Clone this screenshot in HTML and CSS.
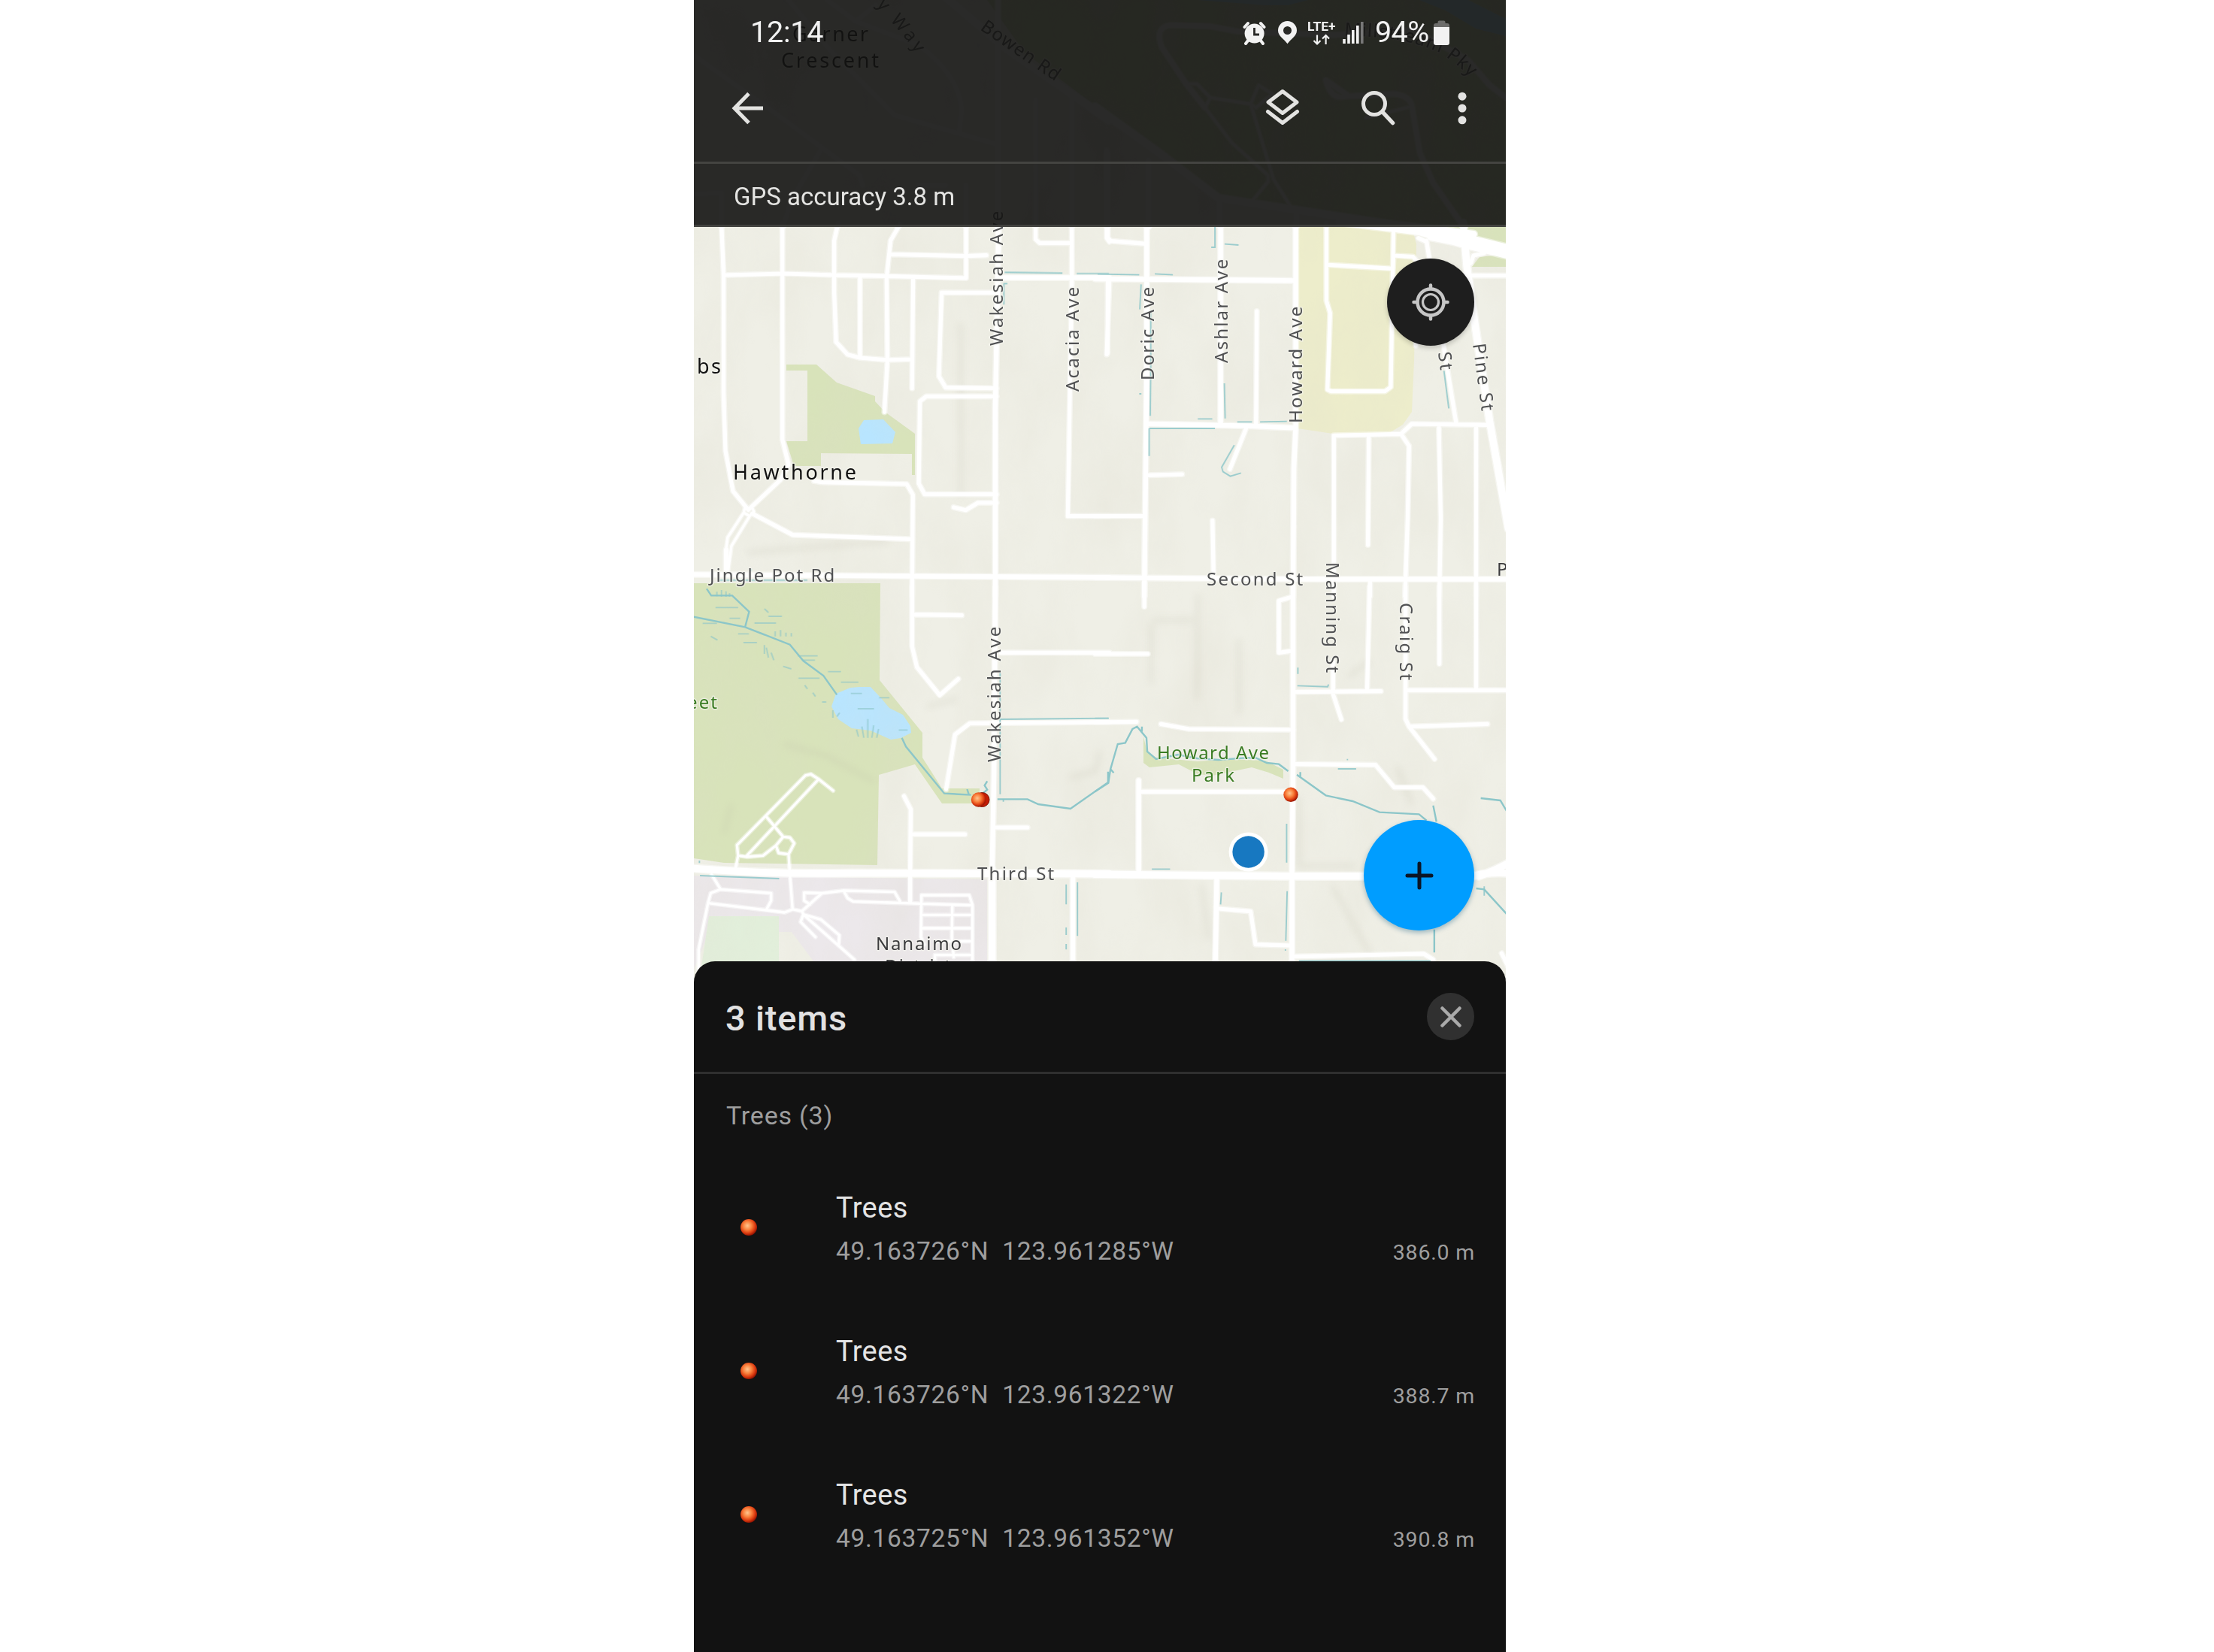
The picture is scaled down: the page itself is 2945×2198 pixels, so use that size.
FILE: index.html
```html
<!DOCTYPE html>
<html lang="en">
<head>
<meta charset="utf-8">
<title>Map - 3 items</title>
<link rel="stylesheet" href="styles.css">
</head>
<body>
<main class="phone">
<svg class="map" viewBox="0 0 1080 1340" aria-label="Map">
  <defs>
    <filter id="soft" x="-20%" y="-20%" width="140%" height="140%"><feGaussianBlur stdDeviation="5"/></filter>
    <filter id="relief" x="0" y="0" width="100%" height="100%">
      <feTurbulence type="fractalNoise" baseFrequency="0.014 0.007" numOctaves="4" seed="8"/>
      <feColorMatrix values="0 0 0 0 0.72  0 0 0 0 0.7  0 0 0 0 0.6  0.9 0 0 0 -0.3"/>
    </filter>
    <radialGradient id="ball" cx="42%" cy="40%" r="62%">
      <stop offset="0" stop-color="#ffc58e"/><stop offset=".42" stop-color="#f9803c"/><stop offset=".74" stop-color="#dc3c10"/><stop offset="1" stop-color="#8f1000"/>
    </radialGradient>
    <g id="roads">
      <g transform="translate(-8,0) scale(.35714,.33333)">
        <path d="M22 220L400 510L500 590L640 700M375 0L530 200L770 460L1150 575M520 0L625 85L860 180Q1010 300 1020 440L1010 530M500 590L440 700L385 800L355 905M625 85L700 20M640 700L650 740M860 740H960"/>
        <path class="wide" d="M1155 0V930"/>
        <path class="trunk" d="M940 -30L1180 190L1568 480"/>
        <path d="M1295 400V905M1430 390V905M22 775L125 770V905M1035 740V905M1560 600V905"/>
      </g>
      <g transform="translate(537,0) scale(.35714,.33333)">
        <path class="trunk" d="M-10 425L230 610L450 790L600 815L1060 890L1400 935"/>
        <path class="wide" d="M520 125L420 105L270 100Q210 110 240 190L330 335L400 430M520 125L880 140L1180 120L1380 240L1460 340L1520 390M850 320Q870 400 920 385L1100 375Q1160 380 1170 420L1200 610L1250 730L1360 900M850 320L930 380M35 610V905M190 640V905M455 790V905M740 850V905"/>
        <path class="path" d="M330 335L370 335L420 390L570 415L600 340L650 375L590 430L570 415L655 715L725 835M400 430L500 570L635 700V725L570 810M420 390L400 430M1170 425L1000 470"/>
      </g>
      <g transform="translate(-8,290) scale(.35714,.33333)">
        <path d="M125 20L133 230V700L140 930L168 1090L225 1165M240 1180L390 1265L830 1282M352 20V885L375 985L345 1045L225 1165M560 20L545 90V300L552 495L595 545L640 558L740 567L835 564M790 25L755 90L740 240L743 570L732 775M140 228L360 222L545 228L740 232L1036 240V20M755 145L1035 152L1112 149M641 235V555M839 240L835 680M1150 298H945L935 632L960 677L1150 680M1150 712H888L864 732L860 1060L882 1103H1150M990 1155L1035 1166L1080 1137H1150M470 1050L500 1055L815 1062L838 1105L835 1510M1295 20V85L1310 100H1430M1430 20V260L1415 1190H1570M1570 250L1560 545M1560 30V80L1570 95"/>
        <path class="wide" d="M1158 20L1145 760V1510M1170 238H1570"/>
        <path class="path" d="M212 1158H240L246 1172L230 1190L208 1176ZM208 1176L148 1275L140 1340M230 1190L162 1310L148 1425"/>
        <path class="wide" d="M143 1325V1415"/>
        <path class="wide" d="M20 1423L840 1430L1570 1435"/>
      </g>
      <g transform="translate(537,290) scale(.35714,.33333)">
        <path class="wide" d="M183 20V600L178 1100L174 1510M458 20V815M738 20V830L731 1000L728 1510M-10 243L735 250M190 822L560 830L735 838M-10 1435L740 1442L1530 1442"/>
        <path d="M38 20V80L50 92L180 103M38 250L37 540M593 372L590 825M555 835L493 1002M180 1027L315 1023M-10 1190H175M428 1208L432 1440M852 20V330L866 380L856 685L870 692H1070L1092 675L1102 50M860 187L1100 202L1102 150L1175 155L1190 175L1185 510M1225 90L1255 300L1290 520L1335 815M1390 230H1530M880 1510V868L1130 862L1170 822L1455 826M1010 870L1007 1305M1130 862L1160 910L1155 1190L1145 1510M1271 826L1278 1200L1273 1510M1410 830V1510M1015 1442V1510M1195 80L1225 95M1390 180L1400 150L1440 140"/>
        <path class="trunk" d="M900 15L1200 55L1380 110L1530 150M1200 55L1360 75L1530 120M1240 75L1530 138"/>
        <path class="trunk" d="M1362 20L1375 190L1405 420L1460 810L1530 1240"/>
      </g>
      <g transform="translate(-8,780) scale(.35714,.33333)">
        <path d="M835 0V240L853 323L938 435L1007 370M840 113L1020 116M1165 265H1570M1570 542L1050 547L995 592L962 810M805 838L830 890L828 1140M840 990H1032M1140 963H1265M828 1140V1260"/>
        <path class="wide" d="M1145 0L1140 750L1133 1140"/><path class="trunk" d="M1133 1130V1530M20 1126Q300 1150 600 1145L1570 1148"/>
        <path class="wide" d="M1434 1160V1530"/>
        <path class="path" d="M178 1125L187 1075L183 1033L438 755L458 750L487 770L541 816M487 770L220 1075M187 1075L220 1080L280 1075L328 1035L355 1000L290 917M355 1000L380 1003L396 1026L375 1070L338 1065L328 1035M375 1070L380 1150L390 1290M88 1150L122 1210L85 1225L75 1265L40 1450V1530M122 1210L310 1225V1255L293 1290M75 1265L360 1302L390 1290L425 1297L500 1225L580 1215L770 1220L790 1258M500 1225L433 1223V1255L455 1270M580 1215L595 1245L615 1258L870 1267L1060 1273L1048 1233H870L868 1400L880 1430M1060 1273V1530M870 1312H1060M870 1365H1060M985 1273L983 1400L990 1480M920 1417H1060M920 1472H1060V1530M425 1297L430 1310L420 1340L475 1400M430 1310L495 1330L564 1393L562 1430M430 1310L620 1490M920 1472V1530"/>
      </g>
      <g transform="translate(537,780) scale(.35714,.33333)">
        <path class="wide" d="M728 0V720L724 1140V1530M444 1165L438 1530M153 775V1140"/>
        <path class="trunk" d="M-10 1150L700 1157L1400 1157Q1450 1140 1530 1145M1420 1157Q1470 1140 1530 1105"/>
        <path d="M174 0V82M-10 270H187M-10 543L145 541M236 550L340 570L730 573M725 42L675 58V265L725 258M735 422L1055 419M877 300V430L908 532M1013 0L1004 410M1147 0V530L1160 560L1255 690M1273 0V310M1410 0V410M1147 415H1530M1165 560L1452 550M735 710L1035 713L1105 803H1212L1250 848M160 820H715M450 1287L570 1298L588 1430L720 1434M735 1478L1215 1467L1250 1490M1505 1465L1530 1520"/>
      </g>
    </g>
  </defs>
  <rect class="land" width="1080" height="1340"/>
  <g class="park">
    <path d="M390 0L440 70L500 115L540 145L640 220L700 260L800 277L990 302L1080 325V0Z"/>
    <path d="M123 485L163 485L190 509L241 527V534L254 548L294 577V632H290V604L169 603V620H133L123 587H151V493H123Z"/>
    <path d="M0 776H248L247 905L304 975V1008L330 1049H380V1069H330L294 1017L246 1031L244 1151L40 1148L0 1142Z"/>
    <path d="M598 980L603 1001L615 1008L670 1013L710 1010L760 1012L784 1024V1036L765 1028L742 1021L718 1026L690 1032L670 1030L645 1017L606 1021L598 1015Z"/>
    <path d="M980 302H1080V327L1030 315ZM1045 342L1080 338V355H1035Z"/>
  </g>
  <path class="school" d="M803 302H955L961 325L958 480L955 548L943 565L925 576L850 577L803 570Z"/>
  <path class="campus" d="M0 1165L390 1170V1300H175L130 1240H20L0 1290Z"/>
  <path class="field" d="M20 1219H113V1300H8Z"/>
  <g class="marsh-blue"><path d="M226 559L252 558L268 575L264 590L222 591L219 570Z"/><path d="M189 923L208 915L220 914L235 914L250 930L260 942L278 951L288 966L289 975L275 982L262 984L235 972L210 969L192 957L183 940Z"/><path d="M670 0H817L790 7H760ZM965 0H1030L1080 25V48L1040 38L1000 14Z"/></g>
  <rect width="1080" height="1340" filter="url(#relief)" opacity=".42"/>
  <g class="shade" filter="url(#soft)">
    <path d="M610 825H665M670 790V930M725 850V950M608 830V910M805 1130V1152H880M935 1020L955 1070M870 900L900 880M310 940L350 930M120 990L175 1005L240 1040M500 1035L535 1025L540 1000M675 1175L685 1250M70 735L260 720M355 430V660M805 1060V1150M40 1110L50 1070M850 1180L900 1270"/>
  </g>
  <g class="stream">
    <g transform="translate(-8,780) scale(.35714,.33333)"><path d="M22 122L213 163L380 233L430 298L505 357L555 433M70 10L87 37L165 37L228 102L213 163M797 605L812 640L955 827L1055 833M1040 810L1047 833M1115 778L1105 795L1115 812L1100 825M1153 850L1265 850L1305 870L1425 888L1565 783V740"/></g>
    <g transform="translate(537,780) scale(.35714,.33333)"><path d="M-10 820L40 785L48 730L75 630L103 625L130 570L147 560L182 605L185 660L218 690L300 672L370 687L450 693L550 685L590 685L630 705L675 710L710 738M48 730L60 745M165 560V580M742 752L850 835L950 858L1050 902L1197 910L1225 935M755 742V765M1250 875L1262 940M1427 846L1500 855L1525 900M1410 1206L1440 1210L1525 1310M1254 1370V1462"/></g>
  </g>
  <use href="#roads" class="road-glow"/>
  <use href="#roads" class="road-line"/>
  <g class="ditch">
    <g transform="translate(-8,290) scale(.35714,.33333)"><path d="M1180 217L1395 220M1448 222H1568M1175 262H1190M1177 265V345M115 1446H445M235 1400V1410"/></g>
    <g transform="translate(537,290) scale(.35714,.33333)"><path d="M0 224L155 227M213 223L280 227M162 265L157 365M198 370V600L196 790M437 36V117H423M473 104L525 108M193 840H437M192 840V950M373 802H427M472 660L475 800M520 814H575M605 814L705 812M509 907L462 995L467 1013L494 1031L534 1018M1290 610L1308 760M155 702H163"/></g>
    <g transform="translate(-8,780) scale(.35714,.33333)"><path d="M1163 345V830M1165 531L1568 527M45 1155L340 1167M43 1095V1105M1409 1190V1270M1409 1362V1392M1409 1428V1450M1451 1182V1396M1175 850V860"/><path class="marsh" d="M103 85H187M155 128H195M55 148H108M248 147H328M187 190H227M207 225H257M410 278H483M430 295H473M300 120H350M412 367H490M522 341H570M570 383H635M607 428H648M632 489H693M712 445H750M785 574H818M325 200V180M345 200V175M365 200V185M385 200V187M285 270V235M300 285L292 245M320 295L310 265M108 40V22M125 42V15M142 42V20M155 42V28M670 605V530M655 605L648 560M685 605L692 555M635 600L628 572M703 605L710 570M540 525V495M555 520L565 505M285 90L300 105M355 320L385 330M435 395L445 410M465 425L475 440M85 200L110 215M500 462H515"/></g>
    <g transform="translate(537,780) scale(.35714,.33333)"><path d="M744 397L857 401L860 392M746 325V350M704 948V1103M706 1217L701 1415M461 1222L458 1270M202 1129H270M895 729H963M-10 527H40M750 1495H1240M1440 1198V1235M928 692H933M697 1452H702"/></g>
  </g>
  <g class="label place">
    <text x="131" y="55" textLength="101">Garner</text>
    <text x="116" y="90" textLength="130">Crescent</text>
    <text x="4" y="497" textLength="32">bs</text>
    <text x="52" y="638" textLength="164">Hawthorne</text>
  </g>
  <g class="label street">
    <path id="way" fill="none" stroke="none" d="M229 -10L270 38L286 57L330 122"/>
    <path id="parkway" fill="none" stroke="none" d="M865 47L915 50Q950 53 985 67Q1010 78 1045 115"/>
    <text><textPath href="#way" startOffset="7" textLength="100">ry Way</textPath></text>
    <text transform="translate(380,39) rotate(34.5)" textLength="124">Bowen Rd</text>
    <text><textPath href="#parkway" textLength="184">Millstream Pky</textPath></text>
    <text transform="translate(411,460) rotate(-90)" textLength="181">Wakesiah Ave</text>
    <text transform="translate(511.500,521) rotate(-90)" textLength="141">Acacia Ave</text>
    <text transform="translate(612,506) rotate(-90)" textLength="126">Doric Ave</text>
    <text transform="translate(710,483) rotate(-90)" textLength="140">Ashlar Ave</text>
    <text transform="translate(809,563) rotate(-90)" textLength="157">Howard Ave</text>
    <text transform="translate(990,469) rotate(83)" textLength="26">St</text>
    <text transform="translate(1036,458) rotate(82.4)" textLength="92">Pine St</text>
    <text x="682" y="778.500" textLength="130">Second St</text>
    <text transform="translate(841,748) rotate(90)" textLength="149">Manning St</text>
    <text transform="translate(939,802) rotate(90)" textLength="105">Craig St</text>
    <text x="21" y="774" textLength="168">Jingle Pot Rd</text>
    <text transform="translate(408,1014) rotate(-90)" textLength="182">Wakesiah Ave</text>
    <text x="377" y="1171" textLength="104">Third St</text>
  </g>
  <g class="label poi">
    <text x="1068" y="766">P</text>
    <text x="242" y="1264" textLength="114">Nanaimo</text>
    <text x="254" y="1294" textLength="88">District</text>
  </g>
  <g class="label green">
    <text x="-9" y="943" textLength="40">eet</text>
    <text x="616" y="1010" textLength="149">Howard Ave</text>
    <text x="662" y="1040" textLength="57">Park</text>
  </g>
  <circle cx="383.500" cy="1064" r="9.5" fill="#c21c04" stroke="#7b1204"/>
  <circle cx="378.500" cy="1064" r="9.7" fill="url(#ball)"/>
  <circle cx="794" cy="1057.3" r="9.7" fill="url(#ball)"/>
  <circle cx="737.6" cy="1133.5" r="26" fill="#fff"/>
  <circle cx="737.6" cy="1133.5" r="21.2" fill="#1778c1"/>
</svg>

<header class="top">
  <div class="status">
    <span class="clock">12:14</span>
    <svg class="signals" viewBox="730 26 162 36">
      <g fill="#f2f2f2">
        <circle cx="745.6" cy="44.5" r="13"/>
        <path d="M737 54L734 58M754 54L757 58M732.5 36L737 31M758.500 36L754 31" stroke="#f2f2f2" stroke-width="4" stroke-linecap="round"/>
        <path d="M745.500 37V46H752" fill="none" stroke="#282826" stroke-width="2.8"/>
        <path fill-rule="evenodd" d="M789.500 28a12.500 12.500 0 0 1 12.500 12.600C802 48 794 52 789.500 58.300C785 52 777 48 777 40.600A12.500 12.500 0 0 1 789.500 28ZM789.500 35a5.500 5.500 0 1 0 0 11a5.500 5.500 0 0 0 0-11Z"/>
        <text class="lte" x="816" y="40.800" textLength="37.500" lengthAdjust="spacingAndGlyphs">LTE+</text>
        <path d="M829 46.500V58M824.500 54L829 58.500L833.500 54M840.600 59V47.500M836 51.500L840.600 47L845 51.500" fill="none" stroke="#f2f2f2" stroke-width="2.200"/>
        <path d="M863.200 52h3.600v6h-3.600zM869.200 46h3.600v12h-3.600zM875 40h3.600v18H875zM881 34h3.600v24H881z"/>
        <path d="M887 29h3.600v29H887z" fill="#777"/>
      </g>
    </svg>
    <span class="percent">94%</span>
    <svg class="battery" viewBox="0 0 21 34"><path d="M5.500 4V2.500Q5.500.500 7.500.500H13.500Q15.500.500 15.500 2.500V4H18Q21 4 21 7V9H0V7Q0 4 3 4Z" fill="#6d6d6b"/><path d="M0 9H21V30Q21 33 18 33H3Q0 33 0 30Z" fill="#f2f2f2"/></svg>
  </div>
  <nav class="toolbar">
    <svg class="tool back" viewBox="0 0 48 48"><path d="M44 24H8M25 4.500L6 24L25 43.500" fill="none" stroke="#e3e3e1" stroke-width="5"/></svg>
    <svg class="tool layers" viewBox="0 0 48 52"><path d="M24 5.500L43 20L24 34.500L5 20ZM4.500 32.500L24 47.500L43.500 32.500" fill="none" stroke="#e3e3e1" stroke-width="5" stroke-linejoin="round" stroke-linecap="round"/></svg>
    <svg class="tool search" viewBox="0 0 48 48"><g fill="none" stroke="#e3e3e1" stroke-width="5"><circle cx="19" cy="18" r="14.500"/><path d="M30 29L43.500 43.500" stroke-width="5.500" stroke-linecap="round"/></g></svg>
    <svg class="tool more" viewBox="0 0 14 48"><g fill="#e3e3e1"><circle cx="7" cy="8.200" r="5.500"/><circle cx="7" cy="24" r="5.500"/><circle cx="7" cy="39.800" r="5.500"/></g></svg>
  </nav>
  <div class="gps">GPS accuracy 3.8 m</div>
</header>

<button class="locate" aria-label="Locate"><svg viewBox="0 0 50 50"><g fill="none" stroke="#c6c6c6"><circle cx="25" cy="25" r="17.500" stroke-width="4.500"/><circle cx="25" cy="25" r="10.500" stroke-width="3.200"/><path d="M25 2.500V7M25 43V47.500M2.500 25H7M43 25H47.500" stroke-width="4.500" stroke-linecap="round"/></g></svg></button>
<button class="add" aria-label="Add"><svg viewBox="0 0 40 40"><path d="M20 4V36M4 20H36" stroke="#0b1626" stroke-width="5" stroke-linecap="round"/></svg></button>

<section class="sheet">
  <div class="sheet-head">
    <h1>3 items</h1>
    <button class="close" aria-label="Close"><svg viewBox="0 0 32 32"><path d="M4.500 4.500L27.500 27.500M27.500 4.500L4.500 27.500" stroke="#a9a9a9" stroke-width="4.500" stroke-linecap="round"/></svg></button>
  </div>
  <h2>Trees (3)</h2>
  <ul class="items">
    <li><svg class="dot" viewBox="0 0 24 24"><circle cx="12" cy="12" r="11" fill="url(#ball)"/></svg><div class="info"><b>Trees</b><span>49.163726°N&nbsp; 123.961285°W</span></div><span class="distance">386.0 m</span></li>
    <li><svg class="dot" viewBox="0 0 24 24"><circle cx="12" cy="12" r="11" fill="url(#ball)"/></svg><div class="info"><b>Trees</b><span>49.163726°N&nbsp; 123.961322°W</span></div><span class="distance">388.7 m</span></li>
    <li><svg class="dot" viewBox="0 0 24 24"><circle cx="12" cy="12" r="11" fill="url(#ball)"/></svg><div class="info"><b>Trees</b><span>49.163725°N&nbsp; 123.961352°W</span></div><span class="distance">390.8 m</span></li>
  </ul>
</section>
</main>
</body>
</html>
```
FILE: styles.css
```css
* { box-sizing: border-box; }
body { margin: 0; height: 2198px; padding-left: 923px; background: #fff; overflow: hidden; font-family: Roboto, sans-serif; }
h1, h2, ul { margin: 0; padding: 0; font-weight: 400; }
button { border: 0; padding: 0; border-radius: 50%; display: flex; align-items: center; justify-content: center; }
svg { display: block; }

.phone { position: relative; width: 1080px; height: 2198px; display: grid; grid-template-columns: 1080px; grid-template-rows: 302px 977px 919px; overflow: hidden; }

/* map */
.map { grid-area: 1 / 1 / 4 / 2; width: 1080px; height: 1340px; }
.land { fill: #efefe6; }
.park { fill: #d8e3ba; }
.school { fill: #ededcb; }
.campus { fill: #ece8eb; }
.field { fill: #e2efdb; }
.marsh-blue { fill: #b8e5ff; }
.shade { fill: none; stroke: #b9b7a4; stroke-width: 5; opacity: .24; }
.map path { vector-effect: non-scaling-stroke; }
.stream { fill: none; stroke: #8cc6c9; stroke-width: 2.4; }
.ditch { fill: none; stroke: #8cc6c9; stroke-width: 1.9; opacity: .85; }
.marsh { opacity: .75; }
#roads { fill: none; stroke-linejoin: round; stroke-linecap: round; stroke-width: calc(5.2px + var(--halo)); }
#roads .wide { stroke-width: calc(6.4px + var(--halo)); }
#roads .trunk { stroke-width: calc(9.5px + var(--halo)); }
#roads .path { stroke-width: calc(3.3px + var(--halo)); }
.road-glow { --halo: 3px; stroke: #fff; opacity: .45; }
.road-line { --halo: 0px; stroke: #fff; }
.label { font-family: "Noto Sans", sans-serif; font-size: 24px; stroke: rgba(244, 244, 238, .65); stroke-width: 3px; stroke-linejoin: round; paint-order: stroke; }
.place { font-size: 27px; fill: #111; }
.street { fill: #505153; letter-spacing: 1.8px; }
.poi { fill: #3b3b3d; }
.green { fill: #3a7c23; }

/* header over the map */
.top { grid-area: 1 / 1; position: relative; display: grid; grid-template-rows: 88px 127px 87px; background: rgba(19, 19, 18, .9); border-bottom: 3px solid #42423f; color: #f2f2f2; }
.status { display: flex; padding-left: 75px; font-size: 39.5px; line-height: 46px; padding-top: 20px; }
.clock { width: 655px; letter-spacing: -.2px; }
.signals { width: 162px; height: 36px; margin-top: 6px; }
.lte { font: 700 16px Roboto, sans-serif; }
.percent { width: 77px; margin-left: 14px; letter-spacing: -.6px; }
.battery { width: 21px; height: 34px; margin: 7px 0 0 1px; }
.toolbar { display: flex; align-items: center; padding: 0 50px 16px 48px; }
.tool { width: 48px; height: 48px; }
.layers { height: 52px; margin: -4px 0 0 663px; }
.search { margin-left: 79px; }
.more { width: 14px; margin-left: 81px; }
.gps { border-top: 3px solid #444441; padding-left: 53px; font-size: 33px; line-height: 88px; color: #e4e4e2; }

.locate { position: absolute; left: 922px; top: 344px; width: 116px; height: 116px; background: #1e1e1e; box-shadow: 0 3px 6px rgba(0, 0, 0, .2); }
.locate svg { width: 50px; height: 50px; }
.add { position: absolute; left: 891px; top: 1091px; width: 147px; height: 147px; background: #009dff; box-shadow: 0 3px 6px rgba(0, 80, 120, .35); }
.add svg { width: 40px; height: 40px; }

/* bottom sheet */
.sheet { grid-area: 3 / 1; position: relative; background: #121212; border-radius: 28px 28px 0 0; color: #9e9e9e; }
.sheet-head { height: 150px; padding: 0 42px; border-bottom: 3px solid #2f2f2f; display: flex; align-items: center; justify-content: space-between; }
h1 { font-size: 47px; font-weight: 500; color: #e2e2e2; letter-spacing: .8px; padding-top: 4px; }
.close { width: 63px; height: 63px; background: #303030; }
.close svg { width: 32px; height: 32px; }
h2 { font-size: 34px; line-height: 40px; letter-spacing: .8px; padding: 35px 0 0 43px; }
.items { list-style: none; padding-top: 50px; }
.items li { height: 191px; display: flex; padding: 0 42px 0 61px; }
.dot { width: 24px; height: 24px; margin-top: 67px; }
.info { display: grid; grid-template-rows: 58px 58px; margin-left: 104px; padding-top: 24px; line-height: 58px; font-size: 33.5px; letter-spacing: .67px; }
.info b { font-size: 38px; font-weight: 400; color: #e4e4e4; letter-spacing: .4px; }
.distance { margin-left: auto; padding-top: 83px; font-size: 28.5px; line-height: 60px; letter-spacing: .8px; margin-right: -1px; }
```
